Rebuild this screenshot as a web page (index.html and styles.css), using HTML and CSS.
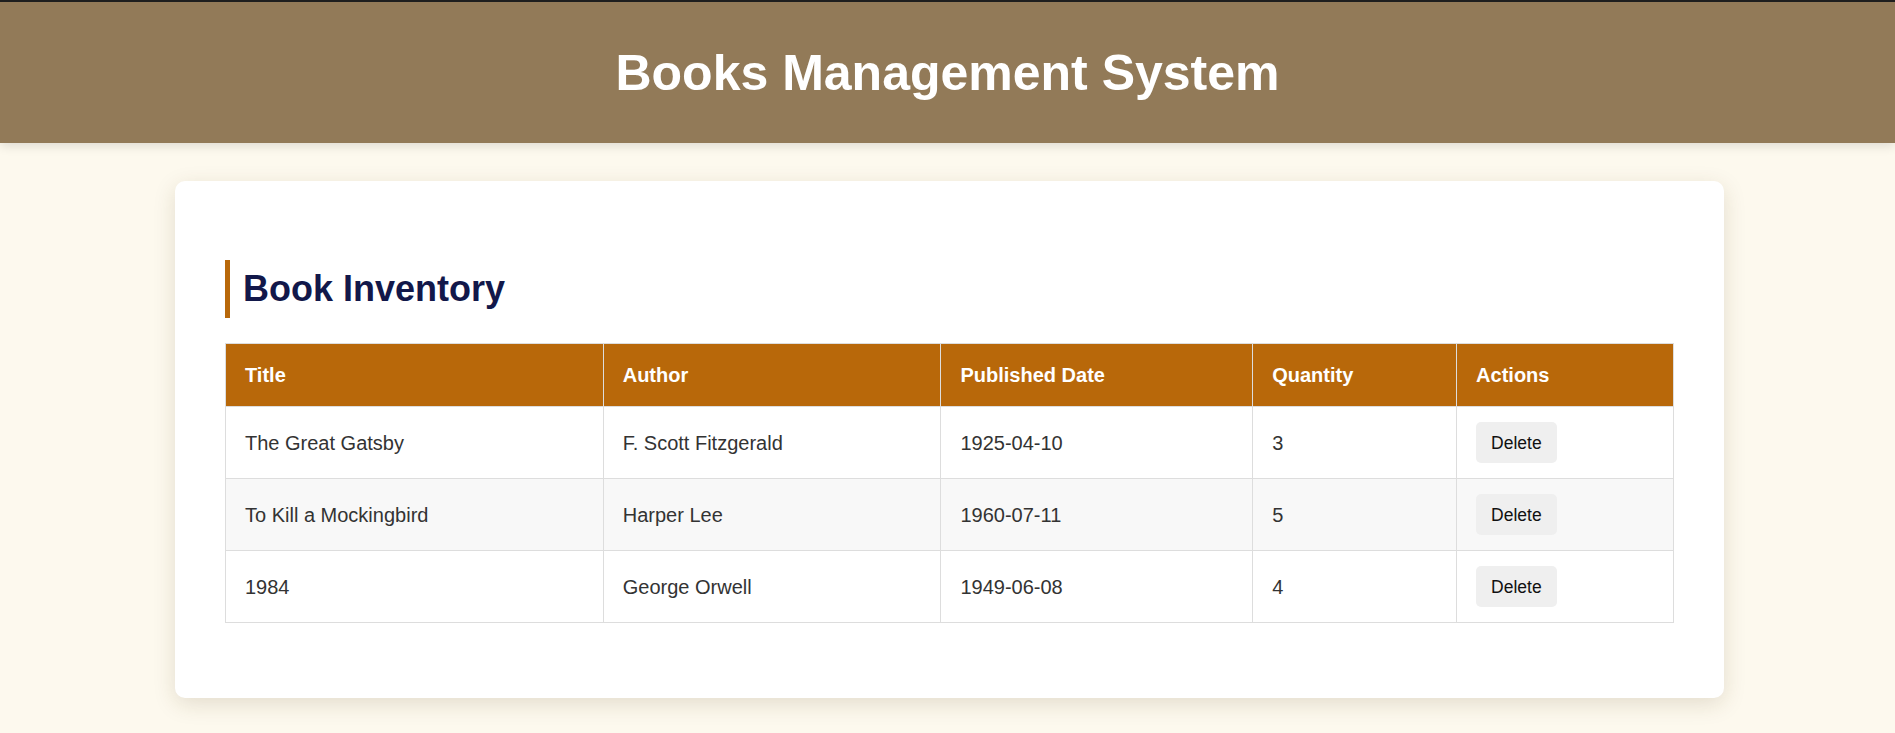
FILE: index.html
```html
<!DOCTYPE html>
<html lang="en">
<head>
<meta charset="utf-8">
<title>Books Management System</title>
<link rel="stylesheet" href="styles.css">
</head>
<body>
<header class="site-header">
  <h1 class="site-title">Books Management System</h1>
</header>
<main class="card">
  <h2 class="section-title">Book Inventory</h2>
  <table class="books">
    <thead>
      <tr>
        <th class="col-title">Title</th>
        <th class="col-author">Author</th>
        <th class="col-date">Published Date</th>
        <th class="col-qty">Quantity</th>
        <th class="col-actions">Actions</th>
      </tr>
    </thead>
    <tbody>
      <tr>
        <td>The Great Gatsby</td>
        <td>F. Scott Fitzgerald</td>
        <td>1925-04-10</td>
        <td>3</td>
        <td><button class="btn-delete">Delete</button></td>
      </tr>
      <tr>
        <td>To Kill a Mockingbird</td>
        <td>Harper Lee</td>
        <td>1960-07-11</td>
        <td>5</td>
        <td><button class="btn-delete">Delete</button></td>
      </tr>
      <tr>
        <td>1984</td>
        <td>George Orwell</td>
        <td>1949-06-08</td>
        <td>4</td>
        <td><button class="btn-delete">Delete</button></td>
      </tr>
    </tbody>
  </table>
</main>
</body>
</html>
```

FILE: styles.css
```css
* {
  box-sizing: border-box;
}

html, body {
  margin: 0;
  padding: 0;
}

body {
  background: #fdf9ee;
  font-family: "Liberation Sans", Arial, sans-serif;
  font-size: 20px;
  line-height: 1.6;
  color: #333;
  min-height: 733px;
}

.site-header {
  background: #927a58;
  border-top: 2px solid #1e1e1e;
  padding: 31px 0 30px;
  text-align: center;
  box-shadow: 0 3px 10px rgba(0, 0, 0, 0.12);
}

.site-title {
  margin: 0;
  font-size: 50px;
  line-height: 80px;
  font-weight: bold;
  color: #ffffff;
}

.card {
  display: block;
  width: 1549px;
  margin: 38px 0 36px calc(50% - 772.5px);
  background: #ffffff;
  border-radius: 10px;
  padding: 50px;
  box-shadow: 0 6px 22px rgba(80, 60, 20, 0.15);
}

.section-title {
  margin: 29px 0 25px;
  font-size: 36px;
  line-height: 58px;
  font-weight: bold;
  color: #12184a;
  border-left: 5px solid #b8680a;
  padding-left: 13px;
}

.books {
  width: 100%;
  border-collapse: collapse;
  margin-bottom: 25px;
}

.books th,
.books td {
  border: 1px solid #dddddd;
  padding: 15px 19px;
  text-align: left;
  vertical-align: middle;
}

.books th {
  background: #b8680a;
  color: #ffffff;
  font-weight: bold;
}

.books tbody tr:nth-child(even) td {
  background: #f8f8f8;
}

.col-title { width: 378px; }
.col-author { width: 338px; }
.col-date { width: 312px; }
.col-qty { width: 204px; }
.col-actions { width: 217px; }

.btn-delete {
  display: block;
  font-family: "Liberation Sans", Arial, sans-serif;
  font-size: 17.5px;
  line-height: 20px;
  height: 41px;
  color: #111;
  background: #efefef;
  border: none;
  border-radius: 5px;
  padding: 10px 15px;
  cursor: pointer;
}
```
